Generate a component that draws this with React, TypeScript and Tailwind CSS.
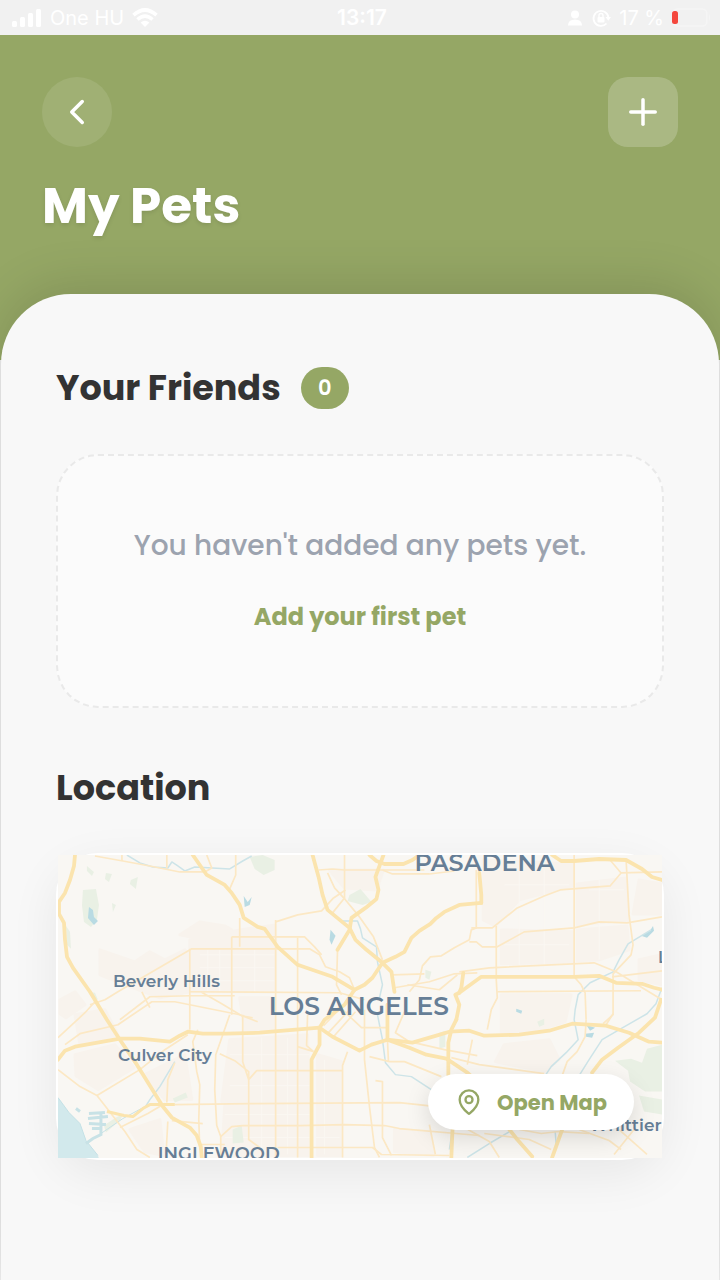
import React from "react";
import { ChevronLeft, Plus, MapPin } from "lucide-react";

const majorRoads = [
  "M75 855 L74 866 L70 880 L65 893 L59 902 L59 914 L64 923 L65 940 L67 957 L73 968 L90 992 L107 1020 L120 1040 L137 1065 L163 1107 L172 1118 L190 1128 L197 1136 L201 1147 L202 1158",
  "M193 855 L207 875 L225 885 L232 893 L240 905 L244 918 L258 927 L265 929 L278 947 L298 965 L333 977 L355 990",
  "M313 855 L319 877 L323 895 L328 910 L350 928 L356 940 L367 950 L383 963 L392 972 L395 992",
  "M384 855 L376 877 L379 890 L377 899 L366 908 L352 918 L350 930 L338 950",
  "M482 903 L460 905 L445 912 L437 918 L431 924 L420 931 L412 938 L405 952 L396 957 L383 963 L373 978 L365 985 L355 990",
  "M482 903 L482 895 L480 873",
  "M370 855 L377 861 L385 864 L404 864 L413 860 L420 855",
  "M553 855 L562 861 L575 861 L600 859 L627 860 L643 869 L653 877 L663 880",
  "M457 1020 L460 1005 L456 995 L460 993 L482 977 L575 977 L600 976 L617 983 L643 984 L655 988 L663 990",
  "M464 973 L462 988 L460 993",
  "M58 1060 L65 1051 L75 1047 L120 1039 L140 1039 L170 1042 L180 1036 L188 1032 L203 1034 L227 1034 L260 1033 L320 1028 L333 1037 L360 1051 L372 1045 L388 1040 L413 1043 L437 1036 L450 1032 L470 1031 L485 1036 L520 1035 L550 1031 L573 1024 L607 1026 L630 1033 L650 1042 L663 1043",
  "M320 1028 L320 1045 L312 1060 L312 1158",
  "M355 990 L345 1005 L325 1020 L320 1028",
  "M388 1005 L388 1040 L410 1048 L427 1055 L447 1059 L468 1073 L485 1088",
  "M457 1020 L452 1030 L449 1043 L449 1075 L455 1100 L453 1133 L452 1158",
  "M662 1000 L656 1018 L640 1033 L619 1048 L603 1060 L593 1073",
  "M507 1126 L518 1140 L533 1157",
  "M563 1130 L558 1144 L553 1158",
];

const minorRoads = [
  "M95 856 L123 861 L150 866 L180 872 L205 872 L212 868 L207 855",
  "M236 855 L236 875 L230 889 M122 855 L122 861 M167 855 L167 868",
  "M90 1005 L105 1000 L118 992 L192 949 L260 949 L310 949 L320 955 L326 967 L340 972 L350 978 L355 990",
  "M58 1038 L85 1013 L95 1002 M65 1045 L80 1034 L118 1025 L152 1002 L175 1002 L215 1010 L240 1015 L258 1022",
  "M142 992 L145 998 L150 1008 M120 1020 L150 997 L190 996 L235 996",
  "M190 949 L190 1030 M232 937 L232 1015 M240 918 L240 947 M276 920 L276 1158 M298 938 L298 1158",
  "M232 937 L305 937 L315 947 L322 955",
  "M201 992 L222 1004 L242 1016 L253 1018 M190 992 L340 993 L365 1000",
  "M276 922 L298 915 L322 911 L334 898 L346 890",
  "M319 870 L333 869 L345 870 L425 870 M328 873 L335 888 L346 900 L360 917 L374 937 L383 960",
  "M345 855 L345 898 L333 913 M383 870 L393 874 L430 874 L455 871",
  "M477 870 L477 928 L472 930 L470 940 L455 948 L442 956 L431 957 L423 966 L420 980 L410 992",
  "M472 928 L493 928 L518 908 L545 896 L561 890 L611 886 L622 873 L663 872 M611 860 L622 873",
  "M470 942 L477 942 L483 947 L498 947 L525 932 L575 928 L600 922 L628 923 L663 917",
  "M497 926 L497 980 L498 998 L492 1010 L488 1030",
  "M575 855 L575 977 L582 985 L586 993 L587 1020",
  "M627 859 L630 915 L634 945 L632 955 L614 974 L614 1015 L604 1024",
  "M460 972 L490 968 L595 963 L617 972 L635 983 L663 1000 M613 977 L663 971",
  "M498 992 L642 991 M393 975 L425 974 M395 988 L430 982 L455 974 L478 973",
  "M408 985 L440 990 L458 975 M338 950 L337 985 L342 995",
  "M58 1070 L80 1087 L97 1096 L108 1110 L125 1132 L137 1150 L150 1158",
  "M97 1096 L140 1070 L165 1050 L188 1035 M120 1128 L148 1114 L165 1104",
  "M198 1030 L193 1042 L197 1072 L200 1085 L199 1120 L200 1150 M230 1015 L222 1038 L216 1055 L215 1090 L217 1126 L221 1137 L221 1158",
  "M175 1063 L168 1080 L167 1103 M175 1105 L250 1104 L400 1103 L428 1106 L480 1115",
  "M220 1054 L235 1061 L249 1072 L249 1140 L260 1148 M243 1015 L243 1062 L249 1080 L257 1071 L343 1071",
  "M221 1137 L232 1127 L243 1126 L300 1126 L345 1125 L385 1126 L400 1129 L480 1136",
  "M172 1121 L203 1124 M168 1122 L166 1158 M202 1145 L225 1145 M278 1148 L373 1148 L382 1155 L450 1156",
  "M308 1015 L307 1046 L314 1052 M298 1047 L314 1052 M348 1052 L343 1066 L343 1158",
  "M365 1010 L365 1060 L370 1107 L375 1148 L380 1158 M376 1081 L383 1082 L383 1138 L392 1156",
  "M370 1057 L390 1062 L405 1062 L442 1077 M388 1040 L389 1062",
  "M405 1012 L396 1033 L410 1042 L445 1050 L478 1056",
  "M324 1026 L340 1009 M328 1034 L350 1010 M334 1037 L356 1012 M342 1009 L362 1028 L388 1028",
  "M430 1125 L436 1155 M452 1058 L480 1065 L545 1074 M468 1065 L473 1040",
  "M587 1020 L586 1037 L578 1052 L568 1062 L563 1076 M614 1014 L607 1025",
  "M465 1128 L490 1142 L500 1158 M485 1134 L530 1140 L552 1150 M580 1130 L610 1141 L622 1150 M635 1130 L615 1155 M620 1130 L648 1155",
  "M520 1130 L542 1134 L560 1132 L590 1134",
];

const faintBlocks = [
  "M100 950 L135 962 L150 952 L165 960 L185 950 L190 955 L190 992 L160 998 L128 986 L100 975 Z",
  "M190 940 L240 930 L276 925 L276 992 L190 992 Z",
  "M60 1000 L75 992 L85 1005 L66 1018 L60 1014 Z",
  "M75 1015 L105 1010 L118 1035 L80 1045 Z",
  "M75 1055 L115 1045 L134 1068 L98 1090 L76 1076 Z",
  "M180 935 L200 922 L225 926 L232 930 L205 940 Z",
  "M330 870 L384 870 L377 890 L345 888 Z",
  "M484 860 L574 864 L574 886 L520 900 L496 926 L484 920 Z",
  "M578 884 L627 878 L630 920 L578 925 Z",
  "M502 930 L574 932 L574 962 L502 964 Z",
  "M578 930 L628 926 L630 950 L600 960 L578 961 Z",
  "M502 995 L572 995 L566 1022 L540 1030 L502 1033 Z",
  "M230 1040 L308 1035 L310 1102 L222 1102 Z",
  "M145 1075 L185 1055 L192 1100 L165 1100 Z",
  "M225 1106 L310 1106 L310 1156 L222 1156 Z",
  "M318 1055 L342 1062 L342 1156 L318 1156 Z",
  "M505 1045 L550 1040 L560 1060 L545 1072 L496 1062 Z",
  "M395 1130 L430 1132 L434 1156 L395 1152 Z",
  "M130 1130 L160 1120 L164 1156 L145 1152 Z",
  "M640 880 L663 884 L663 914 L634 914 Z",
  "M240 998 L274 998 L274 1030 L245 1030 Z",
  "M640 960 L663 955 L663 985 L640 980 Z",
];

const greens = [
  "M83 890 L96 889 L99 905 L97 920 L91 927 L84 922 L82 905 Z",
  "M87 866 L94 872 L92 876 L87 871 Z",
  "M106 873 L112 874 L109 882 L105 879 Z",
  "M131 880 L138 877 L136 889 L130 884 Z",
  "M66 926 L70 932 L71 949 L67 945 Z",
  "M250 857 L263 855 L275 860 L275 870 L264 875 L255 869 Z",
  "M350 895 L361 889 L372 902 L363 905 L348 901 Z",
  "M104 1126 L116 1118 L124 1114 L120 1121 L106 1133 Z",
  "M173 1099 L186 1093 L188 1098 L175 1103 Z",
  "M233 1130 L242 1126 L244 1143 L233 1144 Z",
  "M440 1033 L446 1031 L446 1047 L440 1049 Z",
  "M426 970 L432 972 L430 980 L426 978 Z",
  "M538 1022 L545 1019 L545 1025 L540 1027 Z",
  "M616 1061 L632 1059 L643 1063 L648 1049 L663 1045 L663 1092 L646 1092 L631 1082 L629 1071 Z",
  "M640 1096 L663 1100 L663 1115 L645 1112 Z",
  "M112 903 L116 905 L113 912 Z M88 992 L95 993 L98 1000 L92 998 Z",
];

const streams = [
  "M127 855 L140 863 L153 867 L168 868 L172 862 L178 866 L185 871 L195 867 L230 869 L243 861 L252 856",
  "M343 921 L358 921 L361 929 L363 938 L377 947 L378 962 L383 985 L380 998",
  "M378 1015 L383 1040 L386 1063 L396 1075 L412 1077 L435 1092",
  "M652 930 L629 944 L620 960 L614 972 L591 983 L579 995 L576 1010 L575 1020 L579 1040 L567 1053 L552 1067 L544 1079",
  "M663 988 L657 1004 L648 1014 L622 1029 L603 1040 L590 1060 L580 1076",
  "M468 1158 L490 1144 L512 1131 M556 1132 L557 1145 M453 1131 L450 1150",
  "M175 1062 L160 1087 L150 1100 L145 1108",
];

function LosAngelesMap() {
  return (
    <svg
      viewBox="58 855 605 304"
      className="block w-full overflow-hidden"
      role="img"
      aria-label="Map of Los Angeles"
    >
      <rect x="58" y="855" width="605" height="304" fill="#f9f7f3" />
      <g fill="#f8f3ed" stroke="#f8f3ed" strokeWidth="3" strokeLinejoin="round">
        {faintBlocks.map((d) => (
          <path key={d} d={d} />
        ))}
      </g>
      <g stroke="#faf7f2" strokeWidth="1" fill="none">
        <path d="M200 955 H275 M200 968 H275 M200 981 H275 M208 950 V992 M220 950 V992 M255 950 V992 M230 1055 H310 M230 1086 H310 M225 1115 H310 M225 1138 H340 M262 1038 V1155 M288 1038 V1155 M325 1060 V1155 M505 885 H570 M505 945 H570 M590 890 H625 M520 870 V970 M545 870 V970 M600 880 V960" />
      </g>
      <g fill="#e9f0e4">
        {greens.map((d) => (
          <path key={d} d={d} />
        ))}
      </g>
      <path d="M58 1098 L69 1113 L80 1124 L86 1141 L98 1156 L99 1159 L58 1159 Z" fill="#d2e9ec" />
      <path d="M58 1098 L69 1113 L80 1124 L86 1141 L98 1156" fill="none" stroke="#c4e1e6" strokeWidth="1" />
      <g fill="none" stroke="#c8e2e6" strokeWidth="3">
        <path d="M86 1144 L93 1139 L101 1135 L101 1114 M89 1114 L105 1113 M88 1119 L108 1117 M89 1124 L106 1125 M92 1129 H102" />
        <path d="M101 1134 L123 1119 L145 1107" strokeWidth="1" />
        <path d="M76 1109 L80 1112" />
      </g>
      <g fill="#b9dbe3">
        <path d="M89 907 L93 910 L94 917 L98 921 L94 925 L88 918 Z" />
        <path d="M244 896 L248 902 L252 897 L250 905 L245 907 Z" />
        <path d="M331 930 L336 936 L332 945 L330 940 Z" />
        <path d="M642 936 L651 931 L654 926 L655 931 L648 938 Z" />
        <path d="M517 1009 L523 1011 L522 1014 L517 1012 Z M587 1025 L596 1028 L591 1031 Z M586 1034 L595 1033 L593 1038 L587 1037 Z" />
      </g>
      <g fill="none" stroke="#cde4e8" strokeWidth="1.5" strokeLinejoin="round">
        {streams.map((d) => (
          <path key={d} d={d} />
        ))}
      </g>
      <g fill="none" stroke="#fce8c4" strokeWidth="1.7" strokeLinejoin="round">
        {minorRoads.map((d) => (
          <path key={d} d={d} />
        ))}
      </g>
      <g fill="none" stroke="#fbe4ae" strokeWidth="3.8" strokeLinejoin="round" strokeLinecap="round">
        {majorRoads.map((d) => (
          <path key={d} d={d} />
        ))}
      </g>
      <path
        d="M107 1112 L124 1116 L133 1117 L143 1109 L150 1105 L175 1105"
        fill="none"
        stroke="#fbe4ae"
        strokeWidth="3"
        strokeLinejoin="round"
      />
      <g className="fill-[#667e96] font-['Montserrat','Inter',sans-serif] font-semibold">
        <text x="415" y="871" fontSize="24">PASADENA</text>
        <text x="113" y="987" fontSize="17">Beverly Hills</text>
        <text x="269" y="1015" fontSize="25">LOS ANGELES</text>
        <text x="118" y="1061" fontSize="17">Culver City</text>
        <text x="158" y="1161" fontSize="18">INGLEWOOD</text>
        <text x="590" y="1131" fontSize="17">Whittier</text>
        <text x="659" y="963" fontSize="16">L</text>
      </g>
    </svg>
  );
}

function StatusBar() {
  return (
    <div className="grid h-[35px] grid-cols-3 items-center bg-[#f1f1f1] pr-2 pl-3 font-['Inter',sans-serif] text-[20px] leading-none text-white">
      <div className="flex items-center gap-2">
        <svg viewBox="0 0 30 20" className="h-5 w-[30px] fill-white" aria-hidden="true">
          <rect x="0" y="13" width="5" height="6" rx="1.5" />
          <rect x="8" y="9" width="5" height="10" rx="1.5" />
          <rect x="16" y="5" width="5" height="14" rx="1.5" />
          <rect x="24" y="1" width="5" height="18" rx="1.5" />
        </svg>
        <span className="whitespace-nowrap">One HU</span>
        <svg viewBox="0 0 26 20" className="h-5 w-[26px]" aria-hidden="true">
          <g fill="none" stroke="#fff" strokeWidth="3.6">
            <path d="M1.5 7.2 Q13 -3.2 24.500 7.200" />
            <path d="M5.500 11.500 Q13 4.600 20.500 11.500" />
          </g>
          <path d="M13 19 L8.600 14.500 Q13 10.900 17.400 14.500 Z" fill="#fff" />
        </svg>
      </div>
      <div className="text-center text-[21px] font-semibold">13:17</div>
      <div className="flex items-center justify-end gap-2">
        <svg viewBox="0 0 16 16" className="size-4 fill-white" aria-hidden="true">
          <circle cx="8" cy="4.500" r="4" />
          <path d="M1 15.500 Q1 9.500 8 9.500 Q15 9.500 15 15.500 Z" />
        </svg>
        <svg viewBox="0 0 20 20" className="size-5" aria-hidden="true">
          <path d="M15.500 15.500 A7.500 7.500 0 1 1 17.500 10" fill="none" stroke="#fff" strokeWidth="1.800" />
          <path d="M14.500 9 H20 L17.300 12.800 Z" fill="#fff" />
          <rect x="6.500" y="9" width="7" height="5.500" rx="1" fill="#fff" />
          <path d="M8 9 V7.500 a2 2 0 0 1 4 0 V9" fill="none" stroke="#fff" strokeWidth="1.400" />
        </svg>
        <span className="whitespace-nowrap">17 %</span>
        <svg viewBox="0 0 40 20" className="h-5 w-10" aria-hidden="true">
          <rect x="0.800" y="1" width="34" height="17" rx="4.500" fill="none" stroke="#f5f5f5" strokeWidth="1.500" />
          <rect x="0" y="3" width="6" height="13" rx="2.500" fill="#f4473d" />
          <path d="M37 6.500 Q39.500 9.500 37 12.500 Z" fill="#f5f5f5" />
        </svg>
      </div>
    </div>
  );
}

export default function App() {
  return (
    <div className="flex min-h-screen flex-col bg-[#ececec] font-['Poppins','Inter',sans-serif]">
      <StatusBar />
      <header className="bg-[#95a765] px-[42px] pt-[42px] pb-[119px]">
        <div className="flex items-center justify-between">
          <button
            type="button"
            aria-label="Back"
            className="flex size-[70px] items-center justify-center rounded-full bg-white/10 text-white"
          >
            <ChevronLeft size={42} strokeWidth={2} />
          </button>
          <button
            type="button"
            aria-label="Add pet"
            className="flex size-[70px] items-center justify-center rounded-[20px] bg-white/20 text-white"
          >
            <Plus size={42} strokeWidth={2} />
          </button>
        </div>
        <h1 className="mt-6 text-[50px] leading-[70px] font-bold text-white text-shadow-[0_2px_4px_rgb(0_0_0_/_0.1)]">
          My Pets
        </h1>
      </header>

      <main className="relative mx-px -mt-[66px] flex-1 rounded-t-[70px] bg-[#f8f8f8] px-[55px] pt-[73px] pb-[120px] shadow-[0_-10px_50px_rgba(0,0,0,0.12)]">
        <section>
          <div className="flex items-center gap-5">
            <h2 className="text-[35px] leading-[42px] font-bold text-[#333333]">Your Friends</h2>
            <span className="flex h-[42px] w-12 items-center justify-center rounded-[21px] bg-[#95a765] text-[21px] font-semibold text-white">
              0
            </span>
          </div>
          <div className="mt-[45px] flex flex-col items-center rounded-[42px] border-2 border-dashed border-[#e9e9e9] bg-[#fbfbfb] px-6 pt-[68px] pb-[69px] text-center">
            <p className="text-[28px] leading-[44px] font-medium text-[#9ca3af]">
              You haven't added any pets yet.
            </p>
            <button type="button" className="mt-[29px] text-[24px] leading-10 font-bold text-[#95a765]">
              Add your first pet
            </button>
          </div>
        </section>

        <section className="mt-[59px]">
          <h2 className="text-[35px] leading-[42px] font-bold text-[#333333]">Location</h2>
          <div className="relative mt-11 rounded-[42px] border-2 border-white bg-white shadow-[0_14px_50px_rgba(0,0,0,0.07)]">
            <LosAngelesMap />
            <button
              type="button"
              className="absolute right-7 bottom-7 flex h-14 w-[206px] items-center justify-center gap-3.5 rounded-full bg-white text-[21px] font-bold whitespace-nowrap text-[#95a765] shadow-[0_8px_24px_rgba(0,0,0,0.13)]"
            >
              <MapPin size={28} strokeWidth={2} />
              Open Map
            </button>
          </div>
        </section>
      </main>
    </div>
  );
}
